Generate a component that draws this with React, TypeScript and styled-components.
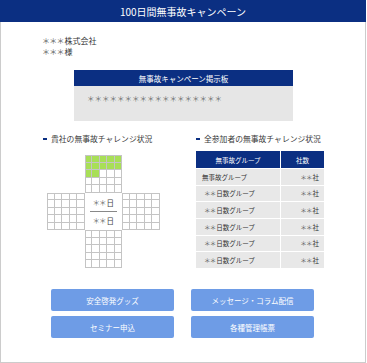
import React from "react";
import styled, { createGlobalStyle } from "styled-components";

const NAVY = "#0b2f82";
const LINE = "#c4c4c4";

const GlobalStyle = createGlobalStyle`
  html, body {
    margin: 0;
    padding: 0;
    background: #ffffff;
  }
  body {
    font-family: "Noto Sans CJK JP", "Noto Sans", sans-serif;
    color: #333333;
  }
`;

const Frame = styled.div`
  width: 366px;
  height: 363px;
  box-sizing: border-box;
  border: 1px solid #cccccc;
  border-top: none;
  display: flex;
  flex-direction: column;
`;

const Header = styled.header`
  height: 22px;
  margin: 0 -1px;
  background: ${NAVY};
  color: #ffffff;
  font-size: 10px;
  display: flex;
  align-items: center;
  justify-content: center;
`;

const Addressee = styled.div`
  margin: 13px 0 0 41px;
  font-size: 8px;
  line-height: 11px;
`;

const Mask = styled.span`
  color: #6a6a6a;
  letter-spacing: -0.8px;
  margin-right: 0.8px;
`;

const Board = styled.section`
  margin: 13px 0 0 73px;
  width: 219px;
`;

const BoardTitle = styled.div`
  height: 16px;
  background: ${NAVY};
  color: #ffffff;
  font-size: 7.5px;
  display: flex;
  align-items: center;
  justify-content: center;
`;

const BoardBody = styled.div`
  height: 35px;
  box-sizing: border-box;
  background: #e6e6e6;
  padding: 8px 0 0 13px;
  font-size: 7.5px;
  line-height: 10px;
  color: #6a6a6a;
`;

const Columns = styled.div`
  display: flex;
  margin-top: 12px;
  padding-left: 42px;
`;

const Column = styled.div<{ $width: number }>`
  width: ${(p) => p.$width}px;
  display: flex;
  flex-direction: column;
`;

const Heading = styled.h3`
  margin: 0;
  font-size: 7.8px;
  font-weight: normal;
  line-height: 12px;
  display: flex;
  align-items: center;
  gap: 4px;
  color: #3a3a3a;

  &::before {
    content: "";
    width: 4px;
    height: 2px;
    background: ${NAVY};
  }
`;

const CrossGrid = styled.div`
  margin: 10px 0 0 4px;
  display: grid;
  grid-template-columns: repeat(15, 7.5px);
  grid-template-rows: repeat(15, 7.5px);
`;

const Cell = styled.div<{ $green: boolean; $left: boolean; $top: boolean }>`
  box-sizing: border-box;
  min-width: 0;
  min-height: 0;
  background: ${(p) => (p.$green ? "#a8df57" : "#ffffff")};
  border-right: 1px solid ${LINE};
  border-bottom: 1px solid ${LINE};
  border-left: ${(p) => (p.$left ? `1px solid ${LINE}` : "none")};
  border-top: ${(p) => (p.$top ? `1px solid ${LINE}` : "none")};
`;

const Center = styled.div`
  grid-column: 6 / 11;
  grid-row: 6 / 11;
  display: flex;
  flex-direction: column;
  align-items: center;
  justify-content: center;
  font-size: 7.5px;
  color: #444444;
`;

const CenterValue = styled.div`
  line-height: 9px;
`;

const Divider = styled.div`
  width: 27px;
  height: 1px;
  background: #888888;
  margin: 4px 0;
`;

const Table = styled.div`
  margin-top: 6px;
  width: 128px;
  height: 117px;
  display: grid;
  grid-template-columns: 84px 43px;
  grid-template-rows: 17px repeat(6, 1fr);
  gap: 1px;
  background: #ffffff;
`;

const HeadCell = styled.div`
  background: ${NAVY};
  color: #ffffff;
  font-size: 6.5px;
  display: flex;
  align-items: center;
  justify-content: center;
`;

const BodyCell = styled.div<{ $align: "left" | "right"; $indent?: number }>`
  background: #e8e8e8;
  font-size: 6.5px;
  color: #333333;
  display: flex;
  align-items: center;
  justify-content: ${(p) => (p.$align === "left" ? "flex-start" : "flex-end")};
  padding: ${(p) => (p.$align === "left" ? `0 0 0 ${p.$indent ?? 6}px` : "0 5px 0 0")};
`;

const Buttons = styled.div`
  margin: 21px 0 0 50px;
  display: grid;
  grid-template-columns: 123px 123px;
  column-gap: 17px;
  row-gap: 5px;
`;

const Button = styled.button`
  height: 22px;
  border: none;
  border-radius: 2px;
  background: #6e9ce6;
  color: #ffffff;
  font-family: inherit;
  font-size: 7.5px;
  padding: 0;
`;

const greenCell = (r: number, c: number) =>
  (r < 2 && c >= 5 && c <= 9) || (r === 2 && (c === 5 || c === 6));

const inCross = (r: number, c: number) =>
  r >= 0 && r < 15 && c >= 0 && c < 15 && ((c >= 5 && c <= 9) || (r >= 5 && r <= 9));

const isCenter = (r: number, c: number) => r >= 5 && r <= 9 && c >= 5 && c <= 9;

const isCell = (r: number, c: number) => inCross(r, c) && !isCenter(r, c);

const groups = [
  { name: "無事故グループ", masked: false },
  { name: "日数グループ", masked: true },
  { name: "日数グループ", masked: true },
  { name: "日数グループ", masked: true },
  { name: "日数グループ", masked: true },
  { name: "日数グループ", masked: true },
];

export default function App() {
  const cells: React.ReactNode[] = [];
  for (let r = 0; r < 15; r++) {
    for (let c = 0; c < 15; c++) {
      if (!isCell(r, c)) continue;
      cells.push(
        <Cell
          key={`${r}-${c}`}
          style={{ gridRow: r + 1, gridColumn: c + 1 }}
          $green={greenCell(r, c)}
          $left={!isCell(r, c - 1)}
          $top={!isCell(r - 1, c)}
        />
      );
    }
  }

  return (
    <>
      <GlobalStyle />
      <Frame>
        <Header>100日間無事故キャンペーン</Header>

        <Addressee>
          <div>
            <Mask>＊＊＊</Mask>株式会社
          </div>
          <div>
            <Mask>＊＊＊</Mask>様
          </div>
        </Addressee>

        <Board>
          <BoardTitle>無事故キャンペーン掲示板</BoardTitle>
          <BoardBody>＊＊＊＊＊＊＊＊＊＊＊＊＊＊＊＊＊＊</BoardBody>
        </Board>

        <Columns>
          <Column $width={153}>
            <Heading>貴社の無事故チャレンジ状況</Heading>
            <CrossGrid>
              {cells}
              <Center>
                <CenterValue>
                  <Mask>＊＊</Mask>日
                </CenterValue>
                <Divider />
                <CenterValue>
                  <Mask>＊＊</Mask>日
                </CenterValue>
              </Center>
            </CrossGrid>
          </Column>

          <Column $width={140}>
            <Heading>全参加者の無事故チャレンジ状況</Heading>
            <Table>
              <HeadCell>無事故グループ</HeadCell>
              <HeadCell>社数</HeadCell>
              {groups.map((g, i) => (
                <React.Fragment key={i}>
                  <BodyCell $align="left" $indent={g.masked ? 8 : 6}>
                    {g.masked && <Mask>＊＊</Mask>}
                    {g.name}
                  </BodyCell>
                  <BodyCell $align="right">
                    <Mask>＊＊</Mask>社
                  </BodyCell>
                </React.Fragment>
              ))}
            </Table>
          </Column>
        </Columns>

        <Buttons>
          <Button>安全啓発グッズ</Button>
          <Button>メッセージ・コラム配信</Button>
          <Button>セミナー申込</Button>
          <Button>各種管理帳票</Button>
        </Buttons>
      </Frame>
    </>
  );
}
